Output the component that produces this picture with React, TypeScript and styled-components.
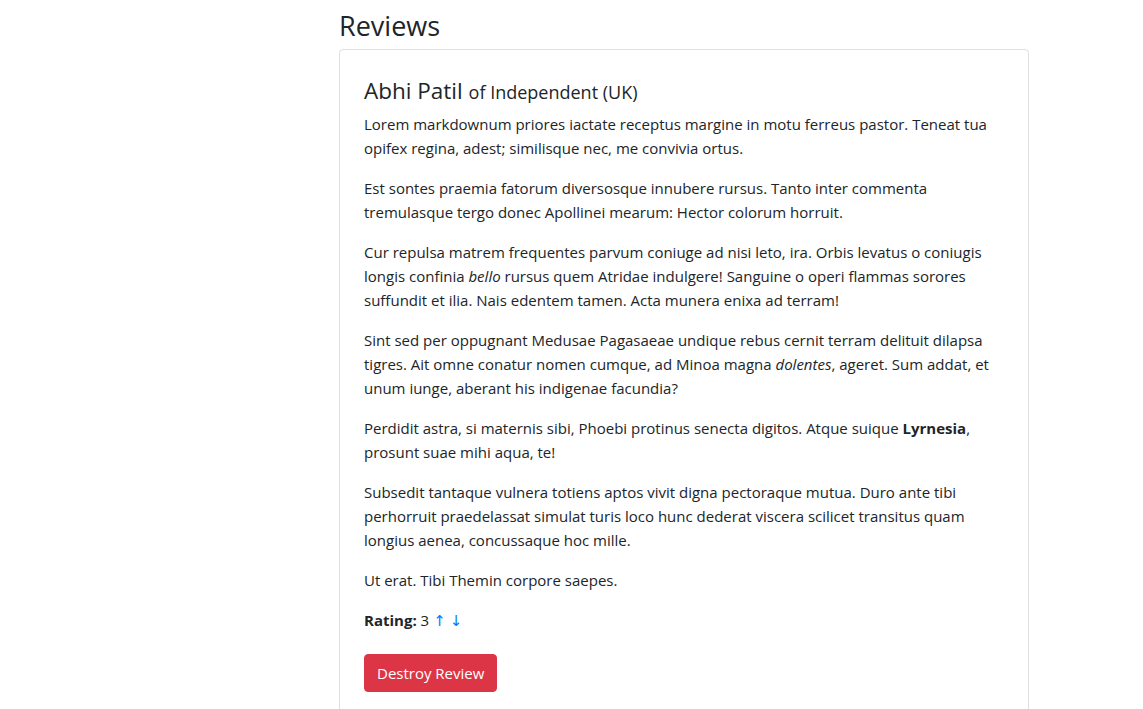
import React from "react";
import styled, { createGlobalStyle } from "styled-components";

const GlobalStyle = createGlobalStyle`
  html, body { margin: 0; padding: 0; background: #fff; }
  body {
    font-family: "Open Sans", "Noto Sans", sans-serif;
    font-size: 15px;
    line-height: 24px;
    color: #212529;
  }
  * { box-sizing: border-box; }
`;

const Page = styled.div`
  display: flex;
  justify-content: flex-start;
  padding: 7px 0 0 339px;
`;

const Column = styled.section`
  width: 690px;
  display: flex;
  flex-direction: column;
`;

const Heading = styled.h2`
  margin: 0 0 4px;
  font-size: 27px;
  line-height: 38px;
  font-weight: 500;
`;

const Card = styled.article`
  border: 1px solid rgba(0, 0, 0, 0.125);
  border-radius: 4px;
  padding: 24px 24px 40px;
  display: flex;
  flex-direction: column;
  align-items: flex-start;
`;

const Title = styled.h4`
  margin: 2px 0 5px;
  font-size: 22.5px;
  line-height: 30px;
  font-weight: 500;
`;

const Affiliation = styled.small`
  font-size: 18px;
  font-weight: 400;
`;

const Para = styled.p<{ $gap?: number }>`
  margin: 0 0 ${(p) => p.$gap ?? 16}px;
`;

const ArrowLink = styled.a`
  color: #007bff;
  text-decoration: none;
  margin-left: 4px;
  font-family: "DejaVu Sans", sans-serif;
  font-size: 15px;
`;

const DangerButton = styled.button`
  background: #dc3545;
  border: 1px solid #dc3545;
  color: #fff;
  font-family: inherit;
  font-size: 15px;
  line-height: 24px;
  padding: 6px 12px;
  border-radius: 4px;
  min-width: 133px;
  white-space: nowrap;
  cursor: pointer;
`;

export default function App() {
  return (
    <>
      <GlobalStyle />
      <Page>
        <Column>
          <Heading>Reviews</Heading>
          <Card>
            <Title>
              Abhi Patil <Affiliation>of Independent (UK)</Affiliation>
            </Title>
            <Para>
              Lorem markdownum priores iactate receptus margine in motu ferreus pastor. Teneat tua
              opifex regina, adest; similisque nec, me convivia ortus.
            </Para>
            <Para>
              Est sontes praemia fatorum diversosque innubere rursus. Tanto inter commenta
              tremulasque tergo donec Apollinei mearum: Hector colorum horruit.
            </Para>
            <Para>
              Cur repulsa matrem frequentes parvum coniuge ad nisi leto, ira. Orbis levatus o coniugis
              longis confinia <em>bello</em> rursus quem Atridae indulgere! Sanguine o operi flammas sorores
              suffundit et ilia. Nais edentem tamen. Acta munera enixa ad terram!
            </Para>
            <Para>
              Sint sed per oppugnant Medusae Pagasaeae undique rebus cernit terram delituit dilapsa
              tigres. Ait omne conatur nomen cumque, ad Minoa magna <em>dolentes</em>, ageret. Sum addat, et
              unum iunge, aberant his indigenae facundia?
            </Para>
            <Para>
              Perdidit astra, si maternis sibi, Phoebi protinus senecta digitos. Atque suique{" "}
              <strong>Lyrnesia</strong>, prosunt suae mihi aqua, te!
            </Para>
            <Para>
              Subsedit tantaque vulnera totiens aptos vivit digna pectoraque mutua. Duro ante tibi
              perhorruit praedelassat simulat turis loco hunc dederat viscera scilicet transitus quam
              longius aenea, concussaque hoc mille.
            </Para>
            <Para>Ut erat. Tibi Themin corpore saepes.</Para>
            <Para $gap={21}>
              <strong>Rating:</strong> 3<ArrowLink href="#">↑</ArrowLink>
              <ArrowLink href="#">↓</ArrowLink>
            </Para>
            <DangerButton type="button">Destroy Review</DangerButton>
          </Card>
        </Column>
      </Page>
    </>
  );
}
